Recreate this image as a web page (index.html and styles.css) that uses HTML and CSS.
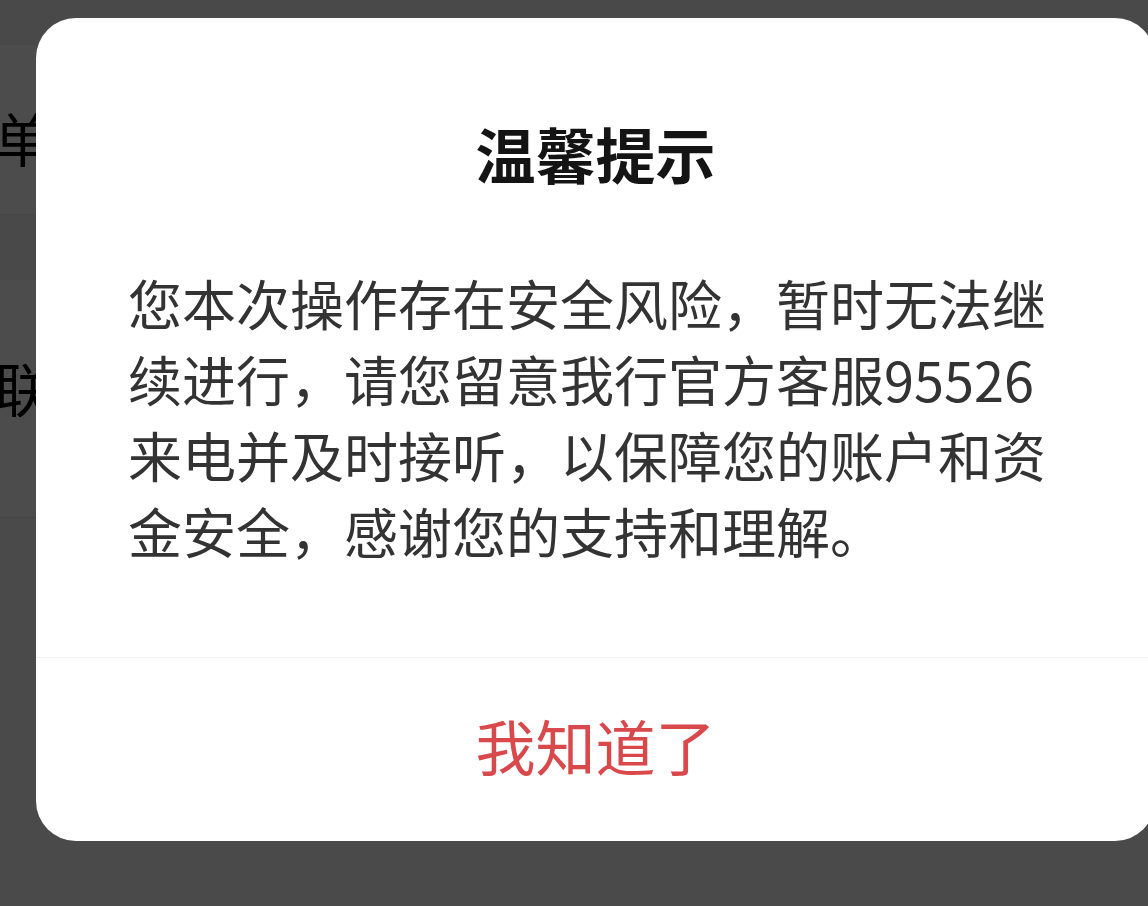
FILE: index.html
```html
<!DOCTYPE html>
<html lang="zh-CN">
<head>
<meta charset="utf-8">
<title>温馨提示</title>
<link rel="stylesheet" href="styles.css">
</head>
<body>
<div class="page">
  <div class="topbar"></div>
  <div class="row row-a"><span class="row-label">单</span></div>
  <div class="gap"></div>
  <div class="row row-b"><span class="row-label">联</span></div>
  <div class="rest"></div>
</div>
<div class="overlay">
  <div class="dialog">
    <h2 class="title">温馨提示</h2>
    <p class="msg">您本次操作存在安全风险，暂时无法继续进行，请您留意我行官方客服95526来电并及时接听，以保障您的账户和资金安全，感谢您的支持和理解。</p>
    <div class="footer"><button class="btn" type="button">我知道了</button></div>
  </div>
</div>
</body>
</html>
```
FILE: styles.css
```css
* { box-sizing: border-box; }
html, body {
  margin: 0;
  padding: 0;
  width: 1148px;
  height: 906px;
  overflow: hidden;
  font-family: "Noto Sans CJK SC", "Noto Sans", sans-serif;
  background: #ffffff;
}
.page {
  display: flex;
  flex-direction: column;
  width: 1148px;
  height: 906px;
}
.topbar {
  height: 45px;
  background: #f3f3f3;
}
.row {
  display: flex;
  align-items: center;
  background: #ffffff;
  color: #000;
  font-size: 58px;
  line-height: 1;
}
.row-label { text-indent: -6px; }
.row-a {
  height: 170px;
  padding-top: 14px;
  border-bottom: 1px solid #eeeeee;
}
.gap {
  height: 65px;
  background: #f3f3f3;
}
.row-b {
  height: 238px;
  padding-bottom: 24px;
  border-bottom: 1px solid #e4e4e4;
}
.rest {
  flex: 1;
  background: #f9f9f9;
}
.overlay {
  position: fixed;
  inset: 0;
  background: rgba(0, 0, 0, 0.7);
  overflow: hidden;
  display: flex;
  align-items: flex-start;
}
.dialog {
  flex: 0 0 1119px;
  width: 1119px;
  height: 823px;
  margin: 18px 0 0 36px;
  background: #ffffff;
  border-radius: 40px;
  display: flex;
  flex-direction: column;
}
.title {
  margin: 105px 0 0;
  font-size: 60px;
  line-height: 60px;
  font-weight: 700;
  color: #141414;
  text-align: center;
}
.msg {
  margin: 82px 0 0;
  padding: 0 92px;
  font-size: 54px;
  line-height: 76px;
  color: #333333;
  text-align: left;
}
.footer {
  margin-top: auto;
  height: 184px;
  padding-bottom: 10px;
  border-top: 1px solid #f0f0f0;
  display: flex;
  align-items: center;
  justify-content: center;
}
.btn {
  border: 0;
  background: none;
  padding: 0;
  font-family: inherit;
  font-size: 60px;
  line-height: 60px;
  font-weight: 400;
  color: #d9484b;
}
```
